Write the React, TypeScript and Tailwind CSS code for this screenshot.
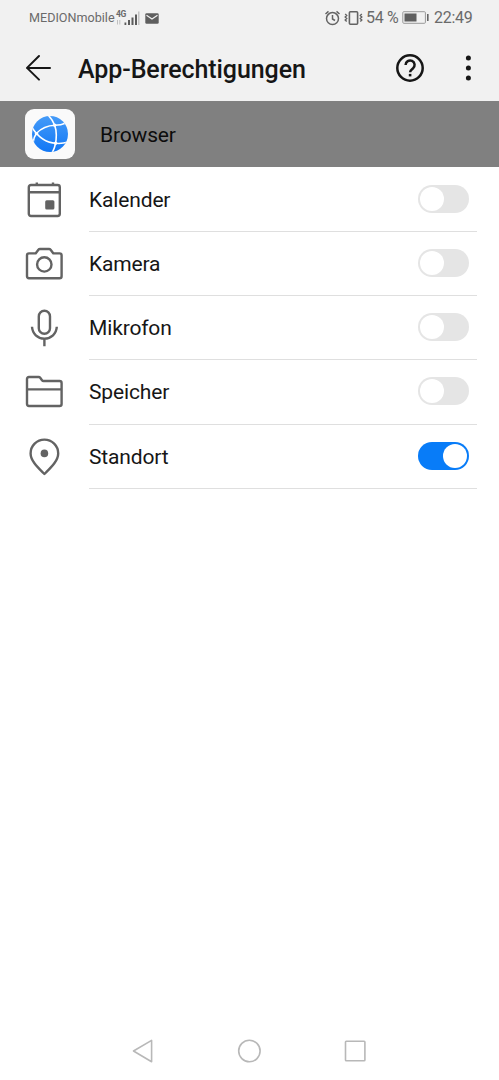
import type { ReactNode } from 'react';

type Permission = {
    name: string;
    icon: ReactNode;
    enabled: boolean;
};

const permissions: Permission[] = [
    {
        name: 'Kalender',
        enabled: false,
        icon: (
            <>
                <rect x="4.8" y="5" width="31" height="31" rx="2.2" />
                <path d="M4.8 12.2h31M12.8 5V2.4M29 5V2.4" />
                <rect x="21.2" y="20.2" width="9.2" height="9.2" rx="1.5" fill="#636363" stroke="none" />
            </>
        ),
    },
    {
        name: 'Kamera',
        enabled: false,
        icon: (
            <>
                <path d="M5 9.4h6.6l2.8-3.6q.6-.8 1.6-.8h9q1 0 1.6.8l2.8 3.6h6.2q2 0 2 2v20.8q0 2-2 2H5q-2 0-2-2V11.4q0-2 2-2z" />
                <circle cx="20.3" cy="20.4" r="7.2" />
            </>
        ),
    },
    {
        name: 'Mikrofon',
        enabled: false,
        icon: (
            <>
                <rect x="14.8" y="2.8" width="11.2" height="23" rx="5.6" />
                <path d="M8 18.8c.4 7 5.6 11.8 12.4 11.8s12-4.8 12.4-11.8M20.4 30.6v7.6" />
            </>
        ),
    },
    {
        name: 'Speicher',
        enabled: false,
        icon: (
            <>
                <path d="M5 5h9.6q1 0 1.6.8l1.8 2.4q.6.8 1.6.8h16q2 0 2 2v21q0 2-2 2H5q-2 0-2-2V7q0-2 2-2z" />
                <path d="M3 17.4h34.6" />
            </>
        ),
    },
    {
        name: 'Standort',
        enabled: true,
        icon: (
            <>
                <path d="M20.4 37C14.5 31 6.6 24 6.6 16.4a13.8 13.8 0 0 1 27.6 0C34.2 24 26.3 31 20.4 37z" />
                <circle cx="20.4" cy="16.4" r="3.8" fill="#636363" stroke="none" />
            </>
        ),
    },
];

function StatusBar() {
    return (
        <div className="flex h-9 items-center pl-[29px] pr-[26px] text-[#6a6a6a]">
            <span className="w-[85px] whitespace-nowrap pt-px text-[12.6px] leading-none">MEDIONmobile</span>

            {/* 4G signal */}
            <div className="ml-[2px] flex h-[16px] items-end">
                <div className="flex h-full w-[9px] flex-col">
                    <span className="text-[8.5px] font-bold leading-none tracking-[-0.5px]">4G</span>
                    <svg width="5" height="5" viewBox="0 0 5 5" className="mt-px" stroke="#c0c0c0">
                        <path d="M1.500 0v4.500M3.800 0v4.500" />
                    </svg>
                </div>
                <svg width="17" height="16" viewBox="0 0 17 16" className="-ml-[2px]" fill="#5c5c5c">
                    <path d="M1.500 12.500h1.800V15H1.500zM5 10h2v5H5zM8.500 7.500h2V15h-2zM12 4.500h2V15h-2z" />
                    <path d="M15 1.500h1.500V15H15z" fill="#c4c4c4" />
                </svg>
            </div>
            <svg width="14" height="11" viewBox="0 0 14 11" className="ml-[5px]">
                <rect x=".3" y=".3" width="13.4" height="10.4" rx="1.3" fill="#5f5f5f" />
                <path d="M1.500 2.300 7 6l5.500-3.700" fill="none" stroke="#f1f1f1" strokeWidth="1.2" />
            </svg>

            <div className="ml-auto flex items-center">
                {/* Alarm */}
                <svg width="16" height="16" viewBox="0 0 16 16" fill="none" stroke="#636363" strokeWidth="1.5">
                    <circle cx="7.5" cy="8.6" r="6" />
                    <path d="M7.500 5v4l2.500 1.500M.5 4l3-2.600M14.500 4l-3-2.600" />
                </svg>
                {/* Vibration */}
                <svg width="19" height="16" viewBox="0 0 19 16" className="ml-[3px]" fill="none" stroke="#636363" strokeWidth="1.6">
                    <rect x="5.4" y="1.7" width="8.2" height="12.6" rx="1" />
                    <path d="M1.200 4l1.500 1.500L1.200 7l1.500 1.500L1.200 10l1.500 1.500M17.800 4l-1.500 1.500L17.800 7l-1.500 1.500L17.800 10l-1.500 1.500" strokeWidth="1.4" />
                </svg>
                <span className="ml-[3px] w-[33px] whitespace-nowrap text-[16px] leading-none tracking-[-0.3px]">54 %</span>
                <svg width="27" height="14" viewBox="0 0 27 14" className="ml-[3px]">
                    <rect x=".8" y=".7" width="22.6" height="11.6" rx="1" fill="none" stroke="#999" />
                    <rect x="2.5" y="2.5" width="12" height="8" fill="#5f5f5f" />
                    <path d="M25 3h1.600v7H25z" fill="#666" />
                </svg>
                <span className="ml-[5px] w-[39px] whitespace-nowrap text-[16px] leading-none tracking-[-0.3px]">22:49</span>
            </div>
        </div>
    );
}

function Header() {
    return (
        <div className="flex h-[65px] items-center pb-px pl-6">
            <svg width="28" height="28" viewBox="0 0 28 28" fill="none" stroke="#161616" strokeWidth="2" strokeLinecap="round" strokeLinejoin="round">
                <path d="M15 2 3 13.900 15 25.600M3 13.900h23" />
            </svg>
            <h1 className="ml-[26px] whitespace-nowrap pt-[3px] text-[25px] font-medium leading-none tracking-[-0.08px] text-[#161616]">App-Berechtigungen</h1>
            <div className="ml-auto flex items-center pr-[28px]">
                <svg width="30" height="30" viewBox="0 0 30 30" fill="none" stroke="#161616" strokeWidth="2.5">
                    <circle cx="15" cy="15" r="12.7" />
                    <path d="M10.600 12a4.500 4.500 0 1 1 7.300 3.500C16.400 16.700 15.100 17.400 15.100 19.300" />
                    <path d="M13.800 20.900h2.600v2.500h-2.600z" fill="#161616" stroke="none" />
                </svg>
                <svg width="6" height="28" viewBox="0 0 6 28" className="ml-[40px]" fill="#161616">
                    <circle cx="3.4" cy="4" r="2.5" />
                    <circle cx="3.4" cy="14" r="2.5" />
                    <circle cx="3.4" cy="24" r="2.5" />
                </svg>
            </div>
        </div>
    );
}

function BrowserLogo() {
    return (
        <svg width="50" height="50" viewBox="0 0 50 50">
            <defs>
                <linearGradient id="globe" x1="0" y1="0" x2="0" y2="1">
                    <stop offset="0" stopColor="#459bf8" />
                    <stop offset="1" stopColor="#1177f5" />
                </linearGradient>
                <clipPath id="globe-clip">
                    <circle cx="25" cy="25" r="18" />
                </clipPath>
            </defs>
            <rect width="50" height="50" rx="9" fill="#fafafa" />
            <circle cx="25" cy="25" r="18" fill="url(#globe)" />
            <g clipPath="url(#globe-clip)">
                <g fill="none" stroke="#fff" strokeWidth="1.6">
                    <path d="M23 6C28 11 31.300 18 31.300 26C31.300 33 30 39 27 44" />
                    <path d="M6 17C12 27 20 34 31 34.300C35 34.700 39 34.300 43 33" />
                    <path d="M8 34C8.500 30 9.500 27 11.300 24.500C17 18.500 23 16.500 30 16.300C34 16.300 37 15.800 41 14" />
                </g>
                <g fill="#fff">
                    <circle cx="29.7" cy="16.3" r="1.7" />
                    <circle cx="11.5" cy="24.6" r="1.7" />
                    <circle cx="30.6" cy="34.3" r="1.7" />
                </g>
            </g>
        </svg>
    );
}

function Toggle({ enabled }: { enabled: boolean }) {
    return (
        <div className={`mb-px flex h-[28px] w-[51px] items-center rounded-full px-[2px] ${enabled ? 'justify-end bg-[#087cf8]' : 'bg-[#e5e5e5]'}`}>
            <div className="h-[24px] w-[24px] rounded-full bg-white"></div>
        </div>
    );
}

export default function App() {
    return (
        <div className="flex h-[1080px] w-[499px] flex-col overflow-hidden bg-white font-[Roboto,sans-serif]">
            <div className="bg-[#f1f1f1]">
                <StatusBar />
                <Header />
            </div>

            {/* App */}
            <div className="flex h-[66.4px] items-center bg-[#808080] pl-[25px]">
                <BrowserLogo />
                <span className="ml-[25px] pt-[2px] text-[21px] leading-none tracking-[-0.15px] text-[#0c0c0c]">Browser</span>
            </div>

            {/* Permissions */}
            <div className="pt-[0.4px]">
                {permissions.map(({ name, icon, enabled }) => (
                    <div key={name} className="flex h-[64.2px] items-center pl-6">
                        <svg width="40" height="40" viewBox="0 0 40 40" fill="none" stroke="#636363" strokeWidth="2.4" strokeLinejoin="round">
                            {icon}
                        </svg>
                        <div className="ml-[25px] mr-[22px] flex h-full flex-1 items-center justify-between border-b border-[#dfdfdf] pr-2">
                            <span className="pt-[2px] text-[21px] leading-none tracking-[-0.15px] text-[#161616]">{name}</span>
                            <Toggle enabled={enabled} />
                        </div>
                    </div>
                ))}
            </div>

            {/* Navigation */}
            <div className="mt-auto flex h-[58px] items-center justify-between pl-[131px] pr-[132px]">
                <svg width="24" height="26" viewBox="0 0 24 26" fill="none" stroke="#b8b8b8" strokeWidth="1.6" strokeLinejoin="round">
                    <path d="M2.500 13 20.600 2.400v21.400z" />
                </svg>
                <svg width="24" height="24" viewBox="0 0 24 24" fill="none" stroke="#b8b8b8" strokeWidth="1.6">
                    <circle cx="12.4" cy="12" r="10.7" />
                </svg>
                <svg width="24" height="24" viewBox="0 0 24 24" fill="none" stroke="#b8b8b8" strokeWidth="1.6">
                    <rect x="2.5" y="2.3" width="19.4" height="19.4" rx=".8" />
                </svg>
            </div>
        </div>
    );
}
